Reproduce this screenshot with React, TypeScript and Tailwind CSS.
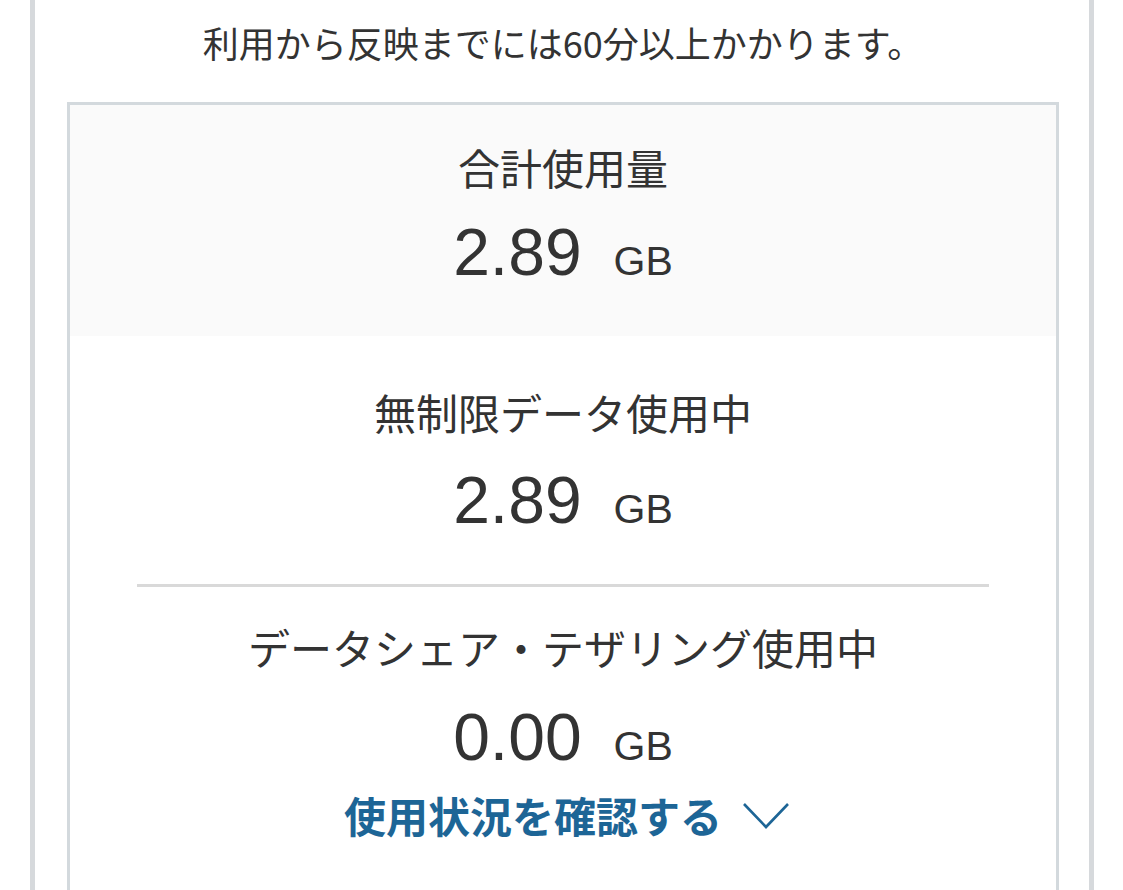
const cjk = 'font-["Noto_Sans_CJK_JP","Noto_Sans",sans-serif]'

function Amount({ value }: { value: string }) {
  return (
    <div className="flex items-baseline justify-center h-[80px] leading-[80px] text-[#333333] font-['Liberation_Sans',Arial,sans-serif]">
      <span className="text-[66px]">{value}</span>
      <span className="text-[41px] ml-[32px]">GB</span>
    </div>
  )
}

function Label({ children }: { children: string }) {
  return (
    <div className={`${cjk} text-center text-[42px] leading-[60px] h-[60px] text-[#333333]`}>{children}</div>
  )
}

export default function App() {
  return (
    <div className="w-[1123px] h-[890px] overflow-hidden bg-white">
      <div className="ml-[30px] w-[1064px] h-full border-x-[5px] border-[#d6d9dc] pl-[32px] pr-[30px]">
        <p className={`${cjk} pt-[17px] h-[102px] text-center text-[36px] leading-[50px] text-[#333333]`}>
          利用から反映までには60分以上かかります。
        </p>
        <div className="border-[3px] border-[#d3d9dd] h-[820px]">
          <div className="bg-[#fafafa] pt-[32px] pb-[44px]">
            <Label>合計使用量</Label>
            <div className="mt-[15px]">
              <Amount value="2.89" />
            </div>
          </div>
          <div className="pt-[46px]">
            <Label>無制限データ使用中</Label>
            <div className="mt-[18px]">
              <Amount value="2.89" />
            </div>
          </div>
          <div className="mx-auto mt-[44px] w-[852px] h-[3px] bg-[#d9d9d9]" />
          <div className="pt-[30px]">
            <Label>データシェア・テザリング使用中</Label>
            <div className="mt-[20px]">
              <Amount value="0.00" />
            </div>
            <button className="mt-[13px] mx-auto pl-[8px] flex items-center h-[50px] text-[#1d6596]">
              <span className={`${cjk} text-[42px] font-bold leading-[50px]`}>使用状況を確認する</span>
              <svg width="48" height="30" viewBox="0 0 48 30" className="ml-[20px] mt-[2px]" fill="none">
                <polyline points="2,3 24,26 46,3" stroke="currentColor" strokeWidth="2.6" strokeLinejoin="miter" />
              </svg>
            </button>
          </div>
        </div>
      </div>
    </div>
  )
}
